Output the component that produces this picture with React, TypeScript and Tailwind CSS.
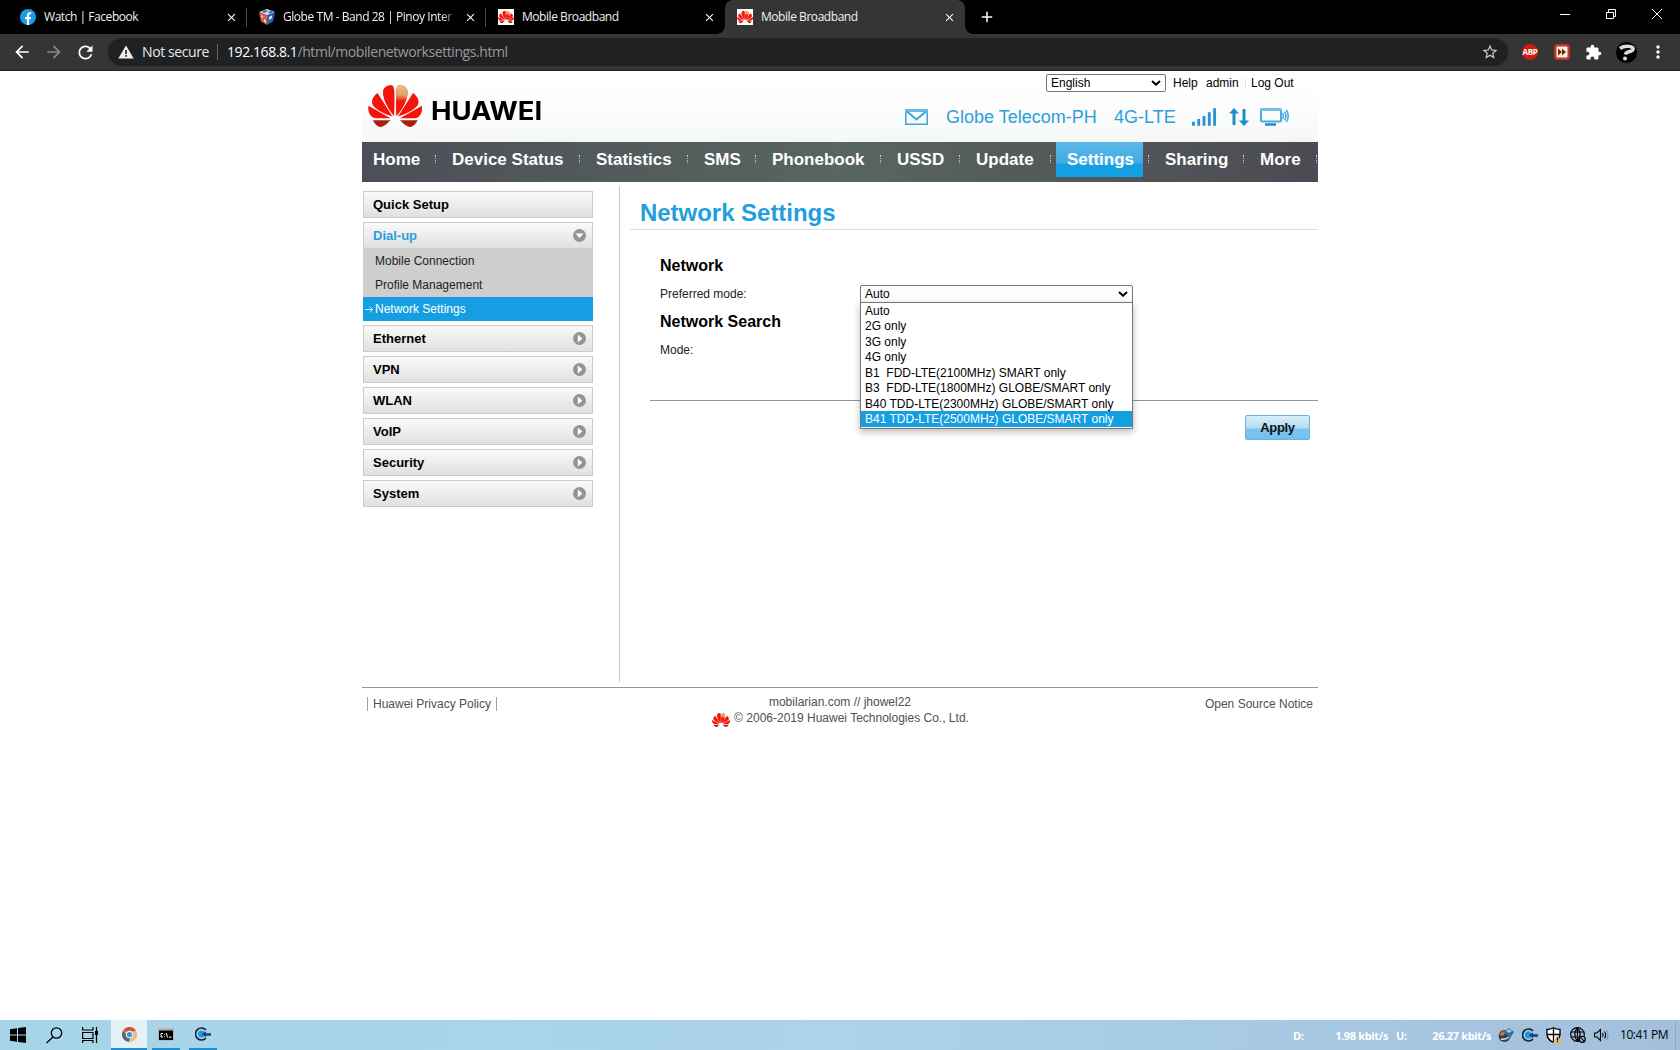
import { useState } from "react";
import type { ReactNode } from "react";
import clsx from "clsx";
import { MdArrowBack, MdArrowForward, MdRefresh, MdStarBorder, MdExtension, MdMoreVert, MdClose, MdAdd } from "react-icons/md";

const navItems = [
  { label: "Home", width: "w-[79px]" },
  { label: "Device Status", width: "w-[144px]" },
  { label: "Statistics", width: "w-[108px]" },
  { label: "SMS", width: "w-[68px]" },
  { label: "Phonebook", width: "w-[125px]" },
  { label: "USSD", width: "w-[79px]" },
  { label: "Update", width: "w-[91px]" },
  { label: "Settings", width: "w-[98px]" },
  { label: "Sharing", width: "w-[95px]" },
  { label: "More", width: "w-[69px]" },
];

const modes = [
  "Auto",
  "2G only",
  "3G only",
  "4G only",
  "B1  FDD-LTE(2100MHz) SMART only",
  "B3  FDD-LTE(1800MHz) GLOBE/SMART only",
  "B40 TDD-LTE(2300MHz) GLOBE/SMART only",
  "B41 TDD-LTE(2500MHz) GLOBE/SMART only",
];

const sections = ["Ethernet", "VPN", "WLAN", "VoIP", "Security", "System"];

function Petals({ className }: { className?: string }) {
  const half = (
    <>
      <path d="M26 31C20 24 14.500 14 15 6.500C15.300 2.500 19 .3 23 0C25.500 0 26.200 3 26.400 9C26.600 17 26.500 25 26 31Z" />
      <path d="M24.500 31.500L9.500 8C5 11.500 3 15 4.500 19.500C8 25.500 17 29 24.500 31.500Z" />
      <path d="M22.500 33.300L.5 20.800C-.5 27 2.500 33 8.500 33.300Z" />
    </>
  );
  return (
    <svg viewBox="0 0 54 42" className={className}>
      <defs>
        <linearGradient id="gold" x1="0" y1="0" x2="0" y2="1">
          <stop offset="0" stopColor="#f0c088" />
          <stop offset=".33" stopColor="#dda060" />
          <stop offset=".52" stopColor="#f01810" />
        </linearGradient>
      </defs>
      <g fill="#f5140c">
        {half}
        <path fill="#a82010" d="M22.500 35.200L5 35.200C7 40 11 43 14.500 41.500C18 40 20 37.500 22.500 35.200Z" />
      </g>
      <g fill="#f5140c" transform="translate(54.500 0) scale(-1 1)">
        {half}
        <path fill="url(#gold)" d="M26 31C20 24 14.500 14 15 6.500C15.300 2.500 19 .3 23 0C25.500 0 26.200 3 26.400 9C26.600 17 26.500 25 26 31Z" />
        <path fill="#a82010" d="M22.500 35.200L5 35.200C7 40 11 43 14.500 41.500C18 40 20 37.500 22.500 35.200Z" />
      </g>
    </svg>
  );
}

function HuaweiFavicon() {
  return (
    <span className="flex h-4 w-4 items-center justify-center bg-white">
      <Petals className="h-[14px] w-4" />
    </span>
  );
}

function FacebookIcon() {
  return (
    <svg viewBox="0 0 16 16" className="h-4 w-4">
      <circle cx="8" cy="8" r="8" fill="#1a9be8" />
      <path d="M6.900 16V10.200H5V8h1.900V6.300C6.900 4.300 8 3.300 9.700 3.300c.8 0 1.500.1 1.500.1v1.900h-.9c-.9 0-1.200.5-1.200 1.100V8h2l-.3 2.200H9.100V16Z" fill="#fff" />
    </svg>
  );
}

function CubeIcon() {
  return (
    <svg viewBox="0 0 16 16" className="h-4 w-4">
      <path d="M0 3L8 0l8 3-8 3.500Z" fill="#c9d4e8" />
      <path d="M0 3l8 3.500V16L2 12.500Z" fill="#d86048" />
      <path d="M16 3L8 6.500V16l6-3.500Z" fill="#2f62b0" />
      <path d="M3 2.500l4-1.300 2 .8-4 1.700ZM9 3.300l3-1.200 2 .8-3.500 1.400Z" fill="#27518f" />
      <path d="M2 6l2 1v2L2.300 8ZM5 10l2 1.500V14L5 12.500Z" fill="#f6d7cc" />
      <path d="M10 8l3-1.500v2.500L10 11Z" fill="#dce8fa" />
    </svg>
  );
}

type TabProps = { title: string; icon: ReactNode; width: string; active?: boolean; divider?: boolean; fade?: boolean };

function BrowserTab({ title, icon, width, active, divider, fade }: TabProps) {
  return (
    <div className={clsx("relative flex h-[34px] items-center pl-3 pr-[9px]", width, active && "rounded-t-lg bg-[#353535]")}>
      {icon}
      <span className={clsx("ml-2 w-[180px] whitespace-nowrap text-xs tracking-[-0.45px] text-[#f0f0f0]", fade && "[mask-image:linear-gradient(to_right,black_88%,transparent_98%)]")}>
        {title}
      </span>
      <MdClose className="ml-auto h-[13px] w-[13px] shrink-0 text-white" />
      {divider && <span className="absolute right-0 top-2 h-[19px] w-px bg-[#4a4a4a]" />}
      {active && (
        <>
          <span className="absolute bottom-0 -left-2 h-2 w-2 bg-[radial-gradient(circle_at_0_0,#000_7.500px,#353535_8px)]" />
          <span className="absolute bottom-0 -right-2 h-2 w-2 bg-[radial-gradient(circle_at_100%_0,#000_7.500px,#353535_8px)]" />
        </>
      )}
    </div>
  );
}

function BrowserChrome() {
  return (
    <div className="font-['Open_Sans',sans-serif]">
      <div className="flex h-[34px] bg-black pl-2">
        <BrowserTab title="Watch | Facebook" icon={<FacebookIcon />} width="w-[239px]" divider />
        <BrowserTab title="Globe TM - Band 28 | Pinoy Inter" icon={<CubeIcon />} width="w-[239px]" divider fade />
        <BrowserTab title="Mobile Broadband" icon={<HuaweiFavicon />} width="w-[239px]" />
        <BrowserTab title="Mobile Broadband" icon={<HuaweiFavicon />} width="w-[240px]" active />
        <MdAdd className="ml-[13px] mt-2 h-[18px] w-[18px] text-white" />
        <svg viewBox="0 0 110 34" className="ml-auto mr-[14px] h-[34px] w-[110px]" fill="none" stroke="#fff">
          <path d="M4 14.500H14M50.500 12.500h7v6h-7ZM52.500 12.500v-3h7v7h-2M96 9l10 10M106 9l-10 10" />
        </svg>
      </div>
      <div className="flex h-[37px] items-center border-b border-[#222] bg-[#353535]">
        <div className="flex w-[108px] items-center pl-3">
          <MdArrowBack className="h-5 w-5 text-white" />
          <MdArrowForward className="ml-3 h-5 w-5 text-[#888]" />
          <MdRefresh className="ml-[11px] h-[21px] w-[21px] text-white" />
        </div>
        <div className="flex h-7 w-[1400px] items-center rounded-full bg-[#202123] pl-[10px] pr-[9px]">
          <svg viewBox="0 0 16 14" className="h-[14px] w-4">
            <path d="M8 .5L15.700 13.500H.3Z" fill="#eee" />
            <path d="M7.200 5h1.600v4H7.200ZM7.200 10h1.600v1.700H7.200Z" fill="#202123" />
          </svg>
          <span className="ml-2 w-[68px] whitespace-nowrap text-sm tracking-[-0.4px] text-[#e8e8e8]">Not secure</span>
          <span className="ml-[7px] h-4 w-px bg-[#666]" />
          <span className="ml-[9px] whitespace-nowrap text-sm tracking-[-0.42px] text-[#9a9a9a]">
            <span className="text-white">192.168.8.1</span>/html/mobilenetworksettings.html
          </span>
          <MdStarBorder className="ml-auto h-[18px] w-[18px] text-[#ccc]" />
        </div>
        <span className="ml-[14px] flex h-4 w-4 items-center justify-center rounded-full bg-[#d01c10] text-[8px] font-bold tracking-[-0.3px] text-white">ABP</span>
        <svg viewBox="0 0 16 16" className="ml-4 h-4 w-4">
          <rect width="16" height="16" rx="3" fill="#b83820" />
          <rect x="2.500" y="2.500" width="11" height="11" rx="1" fill="#fff0e0" />
          <path d="M4 4.500L8 8l-4 3.500ZM8 4.500L12 8l-4 3.500Z" fill="#802010" />
        </svg>
        <MdExtension className="ml-[15px] h-[17px] w-[17px] text-white" />
        <span className="ml-[14px] flex h-[21px] w-[21px] items-center justify-center rounded-full bg-black">
          <svg viewBox="0 0 20 20" className="h-5 w-5" fill="none" stroke="#ddd" strokeWidth="3.500">
            <path d="M3 6.500C7 3.500 17 3.500 16 7.500C15 10.500 9 8.500 8.500 12.500" />
            <circle cx="8" cy="16.500" r="1" strokeWidth="2" />
          </svg>
        </span>
        <MdMoreVert className="ml-[11px] h-5 w-5 text-white" />
      </div>
    </div>
  );
}

function SelectArrow() {
  return (
    <svg viewBox="0 0 10 6" className="h-[6px] w-[10px]" fill="none" stroke="#000" strokeWidth="2">
      <path d="M1 1l4 3.700L9 1" />
    </svg>
  );
}

function Header() {
  return (
    <div className="flex h-[71px] justify-between bg-gradient-to-b from-white via-[#fdfdfd] to-[#f5f7f7]">
      <div className="flex pl-[6px] pt-[14px]">
        <Petals className="h-[42px] w-[54px]" />
        <span className="ml-[9px] mt-[11px] origin-left scale-x-[1.1] font-['Inter',sans-serif] text-[25px] font-bold leading-[30px] tracking-[-0.1px] text-black">HUAWEI</span>
      </div>
      <div className="w-[413px] text-black">
        <div className="flex h-6 items-center pl-[141px] text-xs">
          <div className="flex h-[18px] w-[120px] items-center justify-between rounded-[2px] border border-[#767676] bg-white pl-1 pr-1">
            English
            <SelectArrow />
          </div>
          <span className="ml-[7px] w-[33px]">Help</span>
          <span className="w-[39px]">admin</span>
          <span className="mr-[5px] h-2 border-l border-dotted border-[#ccc]" />
          <span>Log Out</span>
        </div>
        <div className="flex h-11 items-center text-[18px] text-[#2a9fdb]">
          <svg viewBox="0 0 23 16" className="h-4 w-[23px]" fill="none" stroke="#3da5da" strokeWidth="1.500">
            <path d="M.8 3V15.200H22.200V3" />
            <path d="M0 1.500H23" strokeWidth="3" stroke="#6dbbe2" />
            <path d="M2 2.500L11.500 10.500L21 2.500" strokeWidth="2" />
          </svg>
          <span className="ml-[18px] w-[168px] whitespace-nowrap">Globe Telecom-PH</span>
          <span className="w-[78px] whitespace-nowrap">4G-LTE</span>
          <svg viewBox="0 0 26 18" className="h-[18px] w-[25px]" fill="#2a94d2">
            <path d="M0 14h3v4H0ZM5.500 11h3v7h-3ZM11 8h3v10h-3ZM16.500 4h3v14h-3ZM22 0h3v18h-3Z" />
          </svg>
          <svg viewBox="0 0 20 18" className="ml-[12px] h-[18px] w-5" fill="#1c8ccf">
            <path d="M5 0l5 5.500H6.500V17h-3V5.500H0ZM15 18l5-5.500h-3.500V1h-3v11.500H10Z" />
          </svg>
          <svg viewBox="0 0 29 18" className="ml-[11px] h-[18px] w-[29px]" fill="none" stroke="#4aabdc">
            <rect x="1" y="1.500" width="20" height="12" rx="1" strokeWidth="2" />
            <path d="M0 1.500H21" strokeWidth="3" stroke="#75c0e6" />
            <path d="M5 16.500H16" strokeWidth="2.500" stroke="#1c8ccf" />
            <path d="M22.500 5q2 3 0 6M24.500 3.500q3 4.500 0 9M26.500 2q3.500 6 0 12" strokeWidth="1.500" />
          </svg>
        </div>
      </div>
    </div>
  );
}

function NavBar() {
  return (
    <div className="flex h-10 bg-gradient-to-r from-[#4b4f57] via-[#59655f] to-[#4b4b53] text-[17px] font-bold text-white">
      {navItems.map((item, i) => (
        <div key={item.label} className={clsx("flex h-[35px] justify-between", item.width)}>
          <span
            className={clsx(
              "h-[35px] whitespace-nowrap px-[11px] leading-[36px]",
              item.label === "Settings" && "w-[87px] bg-[linear-gradient(#5cb8ea_0,#3fabe4_21px,#14a0e2_22px)]"
            )}
          >
            {item.label}
          </span>
          <span className={clsx("mt-[13px] h-2 border-l border-dotted border-[#c8c8c8]", i < navItems.length - 1 ? "mr-[5px]" : "mr-px")} />
        </div>
      ))}
    </div>
  );
}

function SideIcon({ open }: { open?: boolean }) {
  return (
    <svg viewBox="0 0 13 13" className="h-[13px] w-[13px]">
      <circle cx="6.500" cy="6.500" r="6.500" fill="#949494" />
      <path d={open ? "M2.500 4.500h8L6.500 9Z" : "M4.800 2.500v8L9.300 6.500Z"} fill="#fff" />
    </svg>
  );
}

function SideItem({ label, open, icon = true }: { label: string; open?: boolean; icon?: boolean }) {
  return (
    <div
      className={clsx(
        "flex items-center justify-between border border-[#cbcbcb] bg-gradient-to-b from-[#fafafa] to-[#e0e0e0] pl-[9px] pr-[6px] text-[13px] font-bold",
        open ? "h-[26px] border-b-0 text-[#2a9fdb]" : "mb-1 h-[27px] text-black"
      )}
    >
      {label}
      {icon && <SideIcon open={open} />}
    </div>
  );
}

function Sidebar() {
  return (
    <div className="mt-[4px] h-[496px] w-[258px] border-r border-[#c6c6c6] pl-px pt-[5px]">
      <div className="w-[230px]">
        <SideItem label="Quick Setup" icon={false} />
        <SideItem label="Dial-up" open />
        <div className="mb-1 bg-[#cecece] text-xs text-[#222]">
          <div className="h-[25px] pl-3 leading-[26px]">Mobile Connection</div>
          <div className="h-6 pl-3 leading-[24px]">Profile Management</div>
          <div className="flex h-6 items-center bg-[#159fe2] pl-[2px] text-white">
            <svg viewBox="0 0 8 7" className="mr-[2px] h-[7px] w-2" fill="none" stroke="#fff" strokeWidth=".8">
              <path d="M0 3.500H7.500M4.500 .5l3 3-3 3" />
            </svg>
            Network Settings
          </div>
        </div>
        {sections.map((s) => (
          <SideItem key={s} label={s} />
        ))}
      </div>
    </div>
  );
}

function Content() {
  const [mode] = useState("Auto");
  const [hovered, setHovered] = useState(7);

  return (
    <div className="ml-[10px] flex-1 text-xs text-[#222]">
      <h1 className="h-12 border-b border-[#dedede] pl-[10px] pt-[17px] text-[24px] font-bold leading-[28px] tracking-[-0.03px] text-[#1f9fdd]">Network Settings</h1>
      <div className="pl-[30px] pt-[26px]">
        <h2 className="h-5 text-base font-bold leading-5 text-black">Network</h2>
        <div className="mt-[9px] flex h-[18px] items-center">
          <span className="w-[200px]">Preferred mode:</span>
          <div className="relative">
            <div className="flex h-[18px] w-[273px] items-center justify-between rounded-[2px] border border-[#767676] bg-[#fdfdfd] px-1 text-black">
              {mode}
              <SelectArrow />
            </div>
            <ul className="absolute left-0 top-[17px] z-10 h-[127px] w-[273px] border border-[#767676] bg-white text-black shadow-[0_3px_7px_rgba(0,0,0,0.28)]">
              {modes.map((m, i) => (
                <li
                  key={m}
                  onMouseEnter={() => setHovered(i)}
                  className={clsx("h-[15.450px] whitespace-pre pl-1 leading-[17px]", hovered === i && "bg-[#159fe2] text-white")}
                >
                  {m}
                </li>
              ))}
            </ul>
          </div>
        </div>
        <h2 className="mt-[9px] h-5 text-base font-bold leading-5 text-black">Network Search</h2>
        <div className="mt-[9px] h-[18px] leading-[18px]">Mode:</div>
      </div>
      <div className="ml-5 mt-[41px] border-t border-[#969696] pr-2 pt-[14px]">
        <button className="ml-auto block h-[25px] w-[65px] rounded-[2px] border border-[#6bb4df] bg-[linear-gradient(#d9eefa_0,#b3dcf3_12px,#7cc4ee_13px,#74c0ec_100%)] text-[13px] font-bold leading-[23px] tracking-[-0.3px] text-[#111]">Apply</button>
      </div>
    </div>
  );
}

function Footer() {
  return (
    <div className="mt-[5px] flex justify-between border-t border-[#969696] pl-[5px] pr-[5px] text-xs text-[#505050]">
      <span className="mt-[9px] h-[14px] w-[130px] border-x border-[#a0a0a0] pl-[5px] leading-[14px]">Huawei Privacy Policy</span>
      <div className="mt-[6px] text-center leading-4">
        <div>mobilarian.com // jhowel22</div>
        <div className="flex h-4 items-center pl-px">
          <Petals className="mr-1 mt-1 h-[14px] w-[18px]" />
          © 2006-2019 Huawei Technologies Co., Ltd.
        </div>
      </div>
      <span className="mt-[9px] w-[130px] text-right leading-[14px]">Open Source Notice</span>
    </div>
  );
}

function GlobeArrow() {
  return (
    <svg viewBox="0 0 16 14" className="h-[14px] w-4" fill="none">
      <circle cx="6.500" cy="7" r="3.500" fill="#2196e0" />
      <path d="M11 3A6 6 0 1 0 11 11" stroke="#142034" strokeWidth="1.600" />
      <path d="M7 7l4-2.500v1.700h5v2.600h-5v1.500Z" fill="#1c3c78" />
    </svg>
  );
}

function Taskbar() {
  return (
    <div className="mt-auto flex h-[30px] items-center bg-gradient-to-r from-[#a6d5ea] via-[#abd3ea] to-[#a3bfdc] text-black">
      <svg viewBox="0 0 16 16" className="ml-[10px] h-4 w-4">
        <path d="M0 2.300L7 1.300V7.500H0ZM8 1.100L16 0V7.500H8ZM0 8.500H7V14.700L0 13.700ZM8 8.500H16V16L8 14.900Z" />
      </svg>
      <svg viewBox="0 0 17 17" className="ml-5 h-[17px] w-[17px]" fill="none" stroke="#000" strokeWidth="1.300">
        <circle cx="10.500" cy="6" r="5.200" />
        <path d="M7 10L.5 16" />
      </svg>
      <svg viewBox="0 0 17 16" className="ml-[19px] h-4 w-[17px]" fill="none" stroke="#000" strokeWidth="1.200">
        <path d="M.6 0V3H11V0M.6 5.500H11v6H.6ZM.6 16v-2.500H11V16M14.500 0v16" />
        <path d="M13 4h3v4h-3Z" fill="#000" stroke="none" />
      </svg>
      <div className="ml-3 flex h-[30px] w-9 items-center justify-center border-b-2 border-[#1a90d8] bg-[#e4f1f7]">
        <svg viewBox="0 0 16 16" className="h-[15px] w-[15px]">
          <path d="M1 4A8 8 0 0 1 15 4L11 6H5Z" fill="#c95a30" />
          <path d="M1 4A8 8 0 0 0 7.500 16L9 11Z" fill="#5c6468" />
          <path d="M15 4A8 8 0 0 1 7.500 16L10 10V5Z" fill="#f0bc80" />
          <circle cx="8" cy="8" r="4" fill="#e8f0f4" />
          <circle cx="8" cy="8" r="2.800" fill="#2d9fe0" />
        </svg>
      </div>
      <div className="ml-[5px] flex h-[30px] w-7 items-center justify-center border-b-2 border-[#1a90d8]">
        <svg viewBox="0 0 16 13" className="h-[13px] w-4">
          <rect width="16" height="13" fill="#b5b5b5" />
          <rect x="1" y="2.500" width="14" height="9.500" fill="#000" />
          <path d="M5 5.500H3v3.500h2M6.500 6v.8M6.500 8.300v.8M8.200 5l1.500 4.500M11 9.200h2.500" stroke="#fff" fill="none" />
        </svg>
      </div>
      <div className="ml-[9px] flex h-[30px] w-7 items-center justify-center border-b-2 border-[#1a90d8]">
        <GlobeArrow />
      </div>

      {/* tray */}
      <div className="ml-auto flex h-[30px] items-center font-['Open_Sans',sans-serif]">
        <div className="mt-[3px] flex whitespace-nowrap text-[11px] font-bold tracking-[-0.36px] text-white">
          <span className="w-[15px]">D:</span>
          <span className="w-[80px] text-right">1.98 kbit/s</span>
          <span className="ml-2 w-[15px]">U:</span>
          <span className="w-[80px] text-right">26.27 kbit/s</span>
        </div>
        <svg viewBox="0 0 16 16" className="ml-[7px] h-4 w-4">
          <circle cx="6.500" cy="9" r="6" fill="#334050" />
          <path d="M1 8q3-5 8-4L5 9Z" fill="#c8703c" />
          <path d="M3 12q5 1 8-2" stroke="#ddd" strokeWidth="1.500" fill="none" />
          <path d="M6 5l5-4 5 4-4 6Z" fill="#2a6ea8" />
          <path d="M8 4l3-2 3 2-3 2Z" fill="#b8c4c8" />
        </svg>
        <span className="ml-2"><GlobeArrow /></span>
        <svg viewBox="0 0 16 16" className="ml-2 h-4 w-4" fill="#fff" stroke="#000" strokeWidth="1.300">
          <path d="M7.500 .8Q10 2.500 14 2.500V8Q13 13 7.500 15.500Q2 13 1 8V2.500Q5 2.500 7.500 .8Z" />
          <path d="M7.500 1v14M1 7.500H14" />
          <path d="M11.500 8L16 16H7Z" fill="#f0b96c" stroke="none" />
          <path d="M11.500 10.500v3M11.500 14.200v1" />
        </svg>
        <svg viewBox="0 0 16 16" className="ml-2 h-4 w-4" fill="none" stroke="#000" strokeWidth="1.200">
          <circle cx="7.500" cy="7.500" r="6.800" />
          <path d="M7.500 .7v13.600M.7 5H14.300M.7 10H9M7.500 .7Q2 7.500 7.500 14.300M7.500 .7Q13 7.500 7.500 14.300" />
          <circle cx="12.300" cy="12.300" r="3" fill="#a6c2dd" />
          <path d="M10.200 10.200l4.200 4.200" />
        </svg>
        <svg viewBox="0 0 16 14" className="ml-2 h-[14px] w-4" fill="none" stroke="#000" strokeWidth="1.100">
          <path d="M.6 5H3L6.500 1.500v11L3 9H.6ZM8.500 5q1.200 2 0 4M10.500 3.500q2.200 3.500 0 7" />
          <path d="M12.500 2q3 5 0 10" stroke="#7c94aa" />
        </svg>
        <span className="ml-[10px] w-[55px] whitespace-nowrap text-xs tracking-[-0.45px]">10:41 PM</span>
        <span className="mr-1 h-[30px] w-px bg-[#8faac4]" />
      </div>
    </div>
  );
}

export default function App() {
  return (
    <div className="flex h-[1050px] w-[1680px] flex-col overflow-hidden bg-white font-['Liberation_Sans',Arial,sans-serif]">
      <BrowserChrome />
      <div className="mx-auto w-[956px]">
        <Header />
        <NavBar />
        <div className="flex">
          <Sidebar />
          <Content />
        </div>
        <Footer />
      </div>
      <Taskbar />
    </div>
  );
}
